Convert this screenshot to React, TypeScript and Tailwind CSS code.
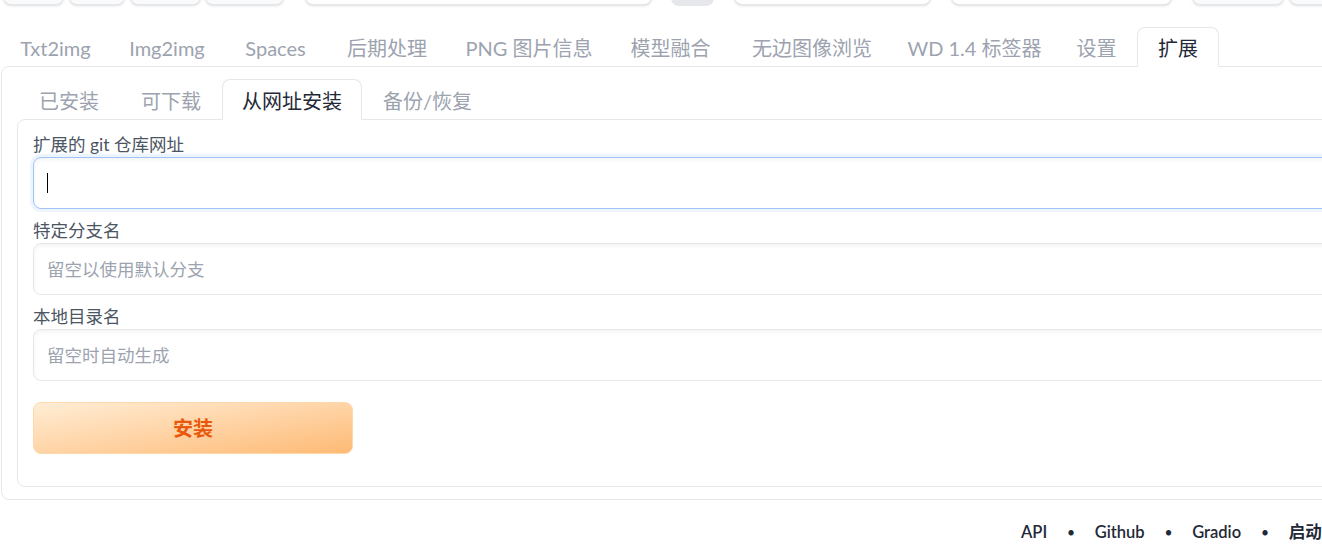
import React from 'react'

const mainTabs = [
  { label: 'Txt2img', w: 'w-[107px]' },
  { label: 'Img2img', w: 'w-[116px]' },
  { label: 'Spaces', w: 'w-[101px]' },
  { label: '后期处理', w: 'w-[122px]' },
  { label: 'PNG 图片信息', w: 'w-[162px]' },
  { label: '模型融合', w: 'w-[121px]' },
  { label: '无边图像浏览', w: 'w-[162px]' },
  { label: 'WD 1.4 标签器', w: 'w-[163px]' },
  { label: '设置', w: 'w-[81px]' },
  { label: '扩展', w: 'w-[82px]' },
]

const subTabs = ['已安装', '可下载', '从网址安装', '备份/恢复']

function TopStrip() {
  // bottoms of the toolbar controls that sit above the visible area
  return (
    <div className="flex h-[8px] items-end overflow-hidden">
      <div className="ml-[2px] mb-[3px] h-[40px] w-[61px] shrink-0 rounded-b-lg border border-[#e5e7eb] bg-[#f9fafb] shadow-sm" />
      <div className="ml-[5px] mb-[3px] h-[40px] w-[56px] shrink-0 rounded-b-lg border border-[#e5e7eb] bg-[#f9fafb] shadow-sm" />
      <div className="ml-[5px] mb-[3px] h-[40px] w-[71px] shrink-0 rounded-b-lg border border-[#e5e7eb] bg-[#f9fafb] shadow-sm" />
      <div className="ml-[4px] mb-[3px] h-[40px] w-[79px] shrink-0 rounded-b-lg border border-[#e5e7eb] bg-[#f9fafb] shadow-sm" />
      <div className="ml-[21px] mb-[3px] h-[40px] w-[347px] shrink-0 rounded-b-lg border border-[#e5e7eb] bg-white shadow-sm" />
      <div className="ml-[19px] mb-[2px] h-[40px] w-[43px] shrink-0 rounded-b-lg bg-[#e5e7eb]" />
      <div className="ml-[20px] mb-[3px] h-[40px] w-[197px] shrink-0 rounded-b-lg border border-[#e5e7eb] bg-white shadow-sm" />
      <div className="ml-[20px] mb-[3px] h-[40px] w-[221px] shrink-0 rounded-b-lg border border-[#e5e7eb] bg-white shadow-sm" />
      <div className="ml-[20px] mb-[3px] h-[40px] w-[92px] shrink-0 rounded-b-lg border border-[#e5e7eb] bg-[#f9fafb] shadow-sm" />
      <div className="ml-[5px] mb-[3px] h-[40px] w-[120px] shrink-0 rounded-b-lg border border-[#e5e7eb] bg-[#f9fafb] shadow-sm" />
    </div>
  )
}

function Field({
  label,
  placeholder,
  focused,
}: {
  label: string
  placeholder?: string
  focused?: boolean
}) {
  return (
    <div className="flex flex-col">
      <label className="mb-[1px] text-[17.5px] leading-[22px] text-[#4b5563]">{label}</label>
      <div className="relative">
        <input
          type="text"
          placeholder={placeholder}
          className={
            focused
              ? 'h-[52px] w-full rounded-lg border border-[#9fc5f8] bg-white px-[13px] text-[17.5px] caret-transparent shadow-[0_0_0_3px_#edf4fe,inset_0_2px_4px_rgba(0,0,0,0.05)] outline-none'
              : 'h-[52px] w-full rounded-lg border border-[#e5e7eb] bg-white px-[13px] text-[17.5px] text-[#1f2937] shadow-[inset_0_2px_4px_rgba(0,0,0,0.05)] outline-none placeholder:text-[#9ca3af]'
          }
        />
        {focused && <span className="absolute left-[14px] top-[16px] h-[20px] w-px bg-black" />}
      </div>
    </div>
  )
}

export default function App() {
  return (
    <div className="h-[550px] w-[1322px] overflow-hidden bg-white font-['Lato','Noto_Sans_CJK_SC',sans-serif]">
      <div className="w-[1700px] px-[1px]">
        <TopStrip />

        {/* main tabs */}
        <div className="mt-[19px] flex items-end pl-[1px]">
          {mainTabs.map((t) => {
            const active = t.label === '扩展'
            return (
              <button
                key={t.label}
                className={
                  active
                    ? `relative z-10 -mb-px h-[40px] ${t.w} rounded-t-lg border border-b-white border-[#e5e7eb] bg-white pt-[2px] text-center text-[20px] text-[#1f2937]`
                    : `h-[39px] ${t.w} pt-[2px] text-center text-[20px] text-[#9ca3af]`
                }
              >
                {t.label}
              </button>
            )
          })}
        </div>

        {/* extensions panel */}
        <div className="rounded-lg border border-[#e5e7eb] px-[15px] pb-[12px] pt-[12px]">
          <div className="flex items-end pl-[1px]">
            {subTabs.map((t) => {
              const active = t === '从网址安装'
              return (
                <button
                  key={t}
                  className={
                    active
                      ? 'relative z-10 -mb-px h-[41px] rounded-t-lg border border-b-white border-[#e5e7eb] bg-white px-[19px] pt-[3px] text-[20px] text-[#1f2937]'
                      : 'h-[40px] px-[21px] pt-[3px] text-[20px] text-[#9ca3af]'
                  }
                >
                  {t}
                </button>
              )
            })}
          </div>

          <div className="rounded-lg border border-[#e5e7eb] px-[15px] pb-[32px] pt-[14px]">
            <div className="flex flex-col gap-[11px]">
              <Field label="扩展的 git 仓库网址" focused />
              <Field label="特定分支名" placeholder="留空以使用默认分支" />
              <Field label="本地目录名" placeholder="留空时自动生成" />
            </div>
            <button className="mt-[21px] h-[52px] w-[320px] rounded-lg border border-[#fed7aa] bg-gradient-to-br from-[#ffedd5] to-[#fdba74] text-[20px] font-bold text-[#ea580c]">
              安装
            </button>
          </div>
        </div>

        {/* footer */}
        <div className="mt-[22px] flex items-center gap-[20px] pl-[1020px] text-[16.5px] font-semibold leading-[20px] text-[#1f2937]">
          <a>API</a>
          <span className="text-[13px]">•</span>
          <a>Github</a>
          <span className="text-[13px]">•</span>
          <a>Gradio</a>
          <span className="text-[13px]">•</span>
          <a className="font-bold">启动分析</a>
        </div>
      </div>
    </div>
  )
}
